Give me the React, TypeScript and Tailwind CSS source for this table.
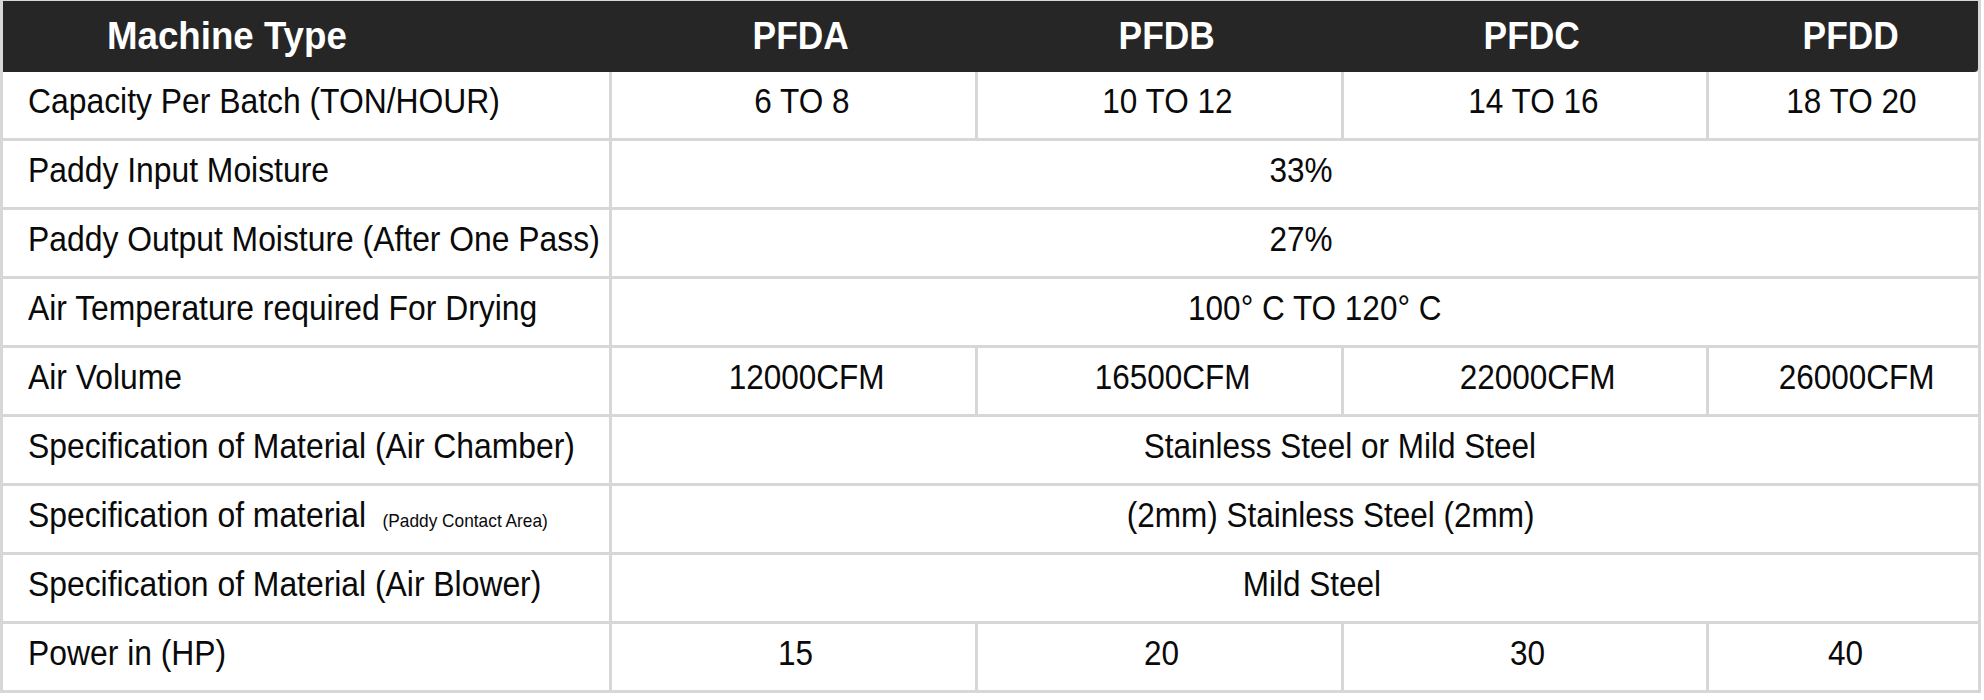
import React from "react";

const font = { fontFamily: '"Liberation Sans", Arial, sans-serif' };

type Row =
  | { label: React.ReactNode; values: string[]; pl: string }
  | { label: React.ReactNode; merged: string; pl: string };

const rows: Row[] = [
  { label: "Capacity Per Batch (TON/HOUR)", values: ["6 TO 8", "10 TO 12", "14 TO 16", "18 TO 20"], pl: "pl-[16px]" },
  { label: "Paddy Input Moisture", merged: "33%", pl: "pl-[12px]" },
  { label: "Paddy Output Moisture (After One Pass)", merged: "27%", pl: "pl-[12px]" },
  { label: "Air Temperature required For Drying", merged: "100° C TO 120° C", pl: "pl-[40px]" },
  { label: "Air Volume", values: ["12000CFM", "16500CFM", "22000CFM", "26000CFM"], pl: "pl-[26px]" },
  { label: "Specification of Material (Air Chamber)", merged: "Stainless Steel or Mild Steel", pl: "pl-[90px]" },
  {
    label: (
      <>
        Specification of material<span className="ml-[18px] text-[19px]">(Paddy Contact Area)</span>
      </>
    ),
    merged: "(2mm) Stainless Steel (2mm)",
    pl: "pl-[72px]",
  },
  { label: "Specification of Material (Air Blower)", merged: "Mild Steel", pl: "pl-[34px]" },
  { label: "Power in (HP)", values: ["15", "20", "30", "40"], pl: "pl-[4px]" },
];

export default function App() {
  return (
    <div className="min-h-[700px] w-[1984px] bg-white" style={font}>
      <div className="w-[1981px] bg-[#d7d7d9] px-[3px] pb-[3px] pt-px">
        <div className="grid h-[71px] grid-cols-[606px_363px_363px_362px_269px] gap-x-[3px] rounded-br-[4px] bg-[#262626] text-[38px] font-bold leading-none text-white">
          <div className="flex items-center pb-[2px] pl-[104px]">
            <span className="inline-block origin-left scale-x-[0.965] whitespace-nowrap">Machine Type</span>
          </div>
          {["PFDA", "PFDB", "PFDC", "PFDD"].map((h) => (
            <div key={h} className="flex items-center justify-center pb-[2px] pl-[14px]">
              <span className="inline-block scale-x-[0.93] whitespace-nowrap">{h}</span>
            </div>
          ))}
        </div>
        <div className="grid grid-cols-[606px_363px_363px_362px_269px] gap-[3px] text-[35px] leading-none text-[#0a0a0a]">
          {rows.map((r, i) => (
            <React.Fragment key={i}>
              <div className="flex h-[66px] items-center overflow-hidden whitespace-nowrap bg-white pb-[10px] pl-[25px]">
                <span className="inline-block origin-left scale-x-[0.91]">{r.label}</span>
              </div>
              {"values" in r ? (
                r.values.map((v) => (
                  <div key={v} className={`flex h-[66px] items-center justify-center bg-white pb-[10px] ${r.pl}`}>
                    <span className="inline-block scale-x-[0.9] whitespace-nowrap">{v}</span>
                  </div>
                ))
              ) : (
                <div className={`col-span-4 flex h-[66px] items-center justify-center bg-white pb-[10px] ${r.pl}`}>
                  <span className="inline-block scale-x-[0.9] whitespace-nowrap">{r.merged}</span>
                </div>
              )}
            </React.Fragment>
          ))}
        </div>
      </div>
    </div>
  );
}
